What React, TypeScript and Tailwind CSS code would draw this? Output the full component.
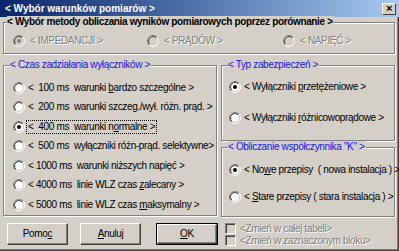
import React from 'react';

const FACE = "font-['Liberation_Sans',Arial,sans-serif]";
const DIS = 'text-[#808080] [text-shadow:1px_1px_0_#fff]';

const Radio: React.FC<{ checked?: boolean; disabled?: boolean }> = ({ checked, disabled }) => (
    <svg width="12" height="12" viewBox="0 0 12 12" className="shrink-0">
        <defs>
            <linearGradient id="rOuter" x1="0" y1="0" x2="1" y2="1">
                <stop offset="0.5" stopColor="#808080" />
                <stop offset="0.5" stopColor="#ffffff" />
            </linearGradient>
            <linearGradient id="rInner" x1="0" y1="0" x2="1" y2="1">
                <stop offset="0.5" stopColor="#404040" />
                <stop offset="0.5" stopColor="#d4d0c8" />
            </linearGradient>
        </defs>
        <circle cx="6" cy="6" r="5.5" fill="none" stroke="url(#rOuter)" />
        <circle cx="6" cy="6" r="4.5" fill={disabled ? '#d4d0c8' : '#ffffff'} stroke="url(#rInner)" />
        {checked && <circle cx="6" cy="6" r="2" fill={disabled ? '#808080' : '#000000'} />}
    </svg>
);

const Check: React.FC = () => (
    <span className="block w-[11px] h-[11px] shrink-0 border border-t-[#808080] border-l-[#808080] border-r-white border-b-white bg-[#d4d0c8] shadow-[inset_1px_1px_0_#404040,inset_-1px_-1px_0_#d4d0c8]" />
);

// etched group box with the caption laid over the top border
const Group: React.FC<{ title: React.ReactNode; titleClass?: string; className?: string; children: React.ReactNode }> = ({
    title,
    titleClass = 'left-[6px] text-[#1414e6]',
    className = '',
    children,
}) => (
    <div className={`relative border border-[#808080] shadow-[1px_1px_0_#fff,inset_1px_1px_0_#fff] ${className}`}>
        <span className={`absolute -top-[7px] bg-[#d4d0c8] pr-px leading-[12px] whitespace-pre ${titleClass}`}>{title}</span>
        {children}
    </div>
);

const Btn: React.FC<{ children: React.ReactNode; isDefault?: boolean }> = ({ children, isDefault }) => (
    <div className={isDefault ? 'border border-black' : ''}>
        <button
            className={`flex items-center justify-center bg-[#d4d0c8] border border-t-white border-l-white border-r-[#404040] border-b-[#404040] shadow-[inset_-1px_-1px_0_#808080] ${isDefault ? 'w-[60px] h-[20px]' : 'w-[61px] h-[22px]'}`}
        >
            {children}
        </button>
    </div>
);

const times: { txt: React.ReactNode; checked?: boolean }[] = [
    { txt: <>{'<  100 ms  warunki '}<u>b</u>{'ardzo szczególne >'}</> },
    { txt: <>{'<  200 ms  warunki szczeg./wył. różn. prąd. >'}</> },
    { txt: <>{'<  400 ms  warunki n'}<u>o</u>{'rmalne >'}</>, checked: true },
    { txt: <>{'<  500 ms  wyłączniki różn-prąd. selektywne>'}</> },
    { txt: <>{'< 1000 ms  warunki niższych napięć >'}</> },
    { txt: <>{'< 4000 ms  linie WLZ czas '}<u>z</u>{'alecany >'}</> },
    { txt: <>{'< 5000 ms  linie WLZ czas '}<u>m</u>{'aksymalny >'}</> },
];

export default function App() {
    return (
        <div
            className={`${FACE} text-[10px] leading-[12px] tracking-[-0.35px] text-black w-[399px] h-[251px] bg-[#d4d0c8] flex flex-col overflow-hidden shadow-[inset_-1px_-1px_0_#404040,inset_-2px_-2px_0_#808080]`}
        >
            {/* Title bar */}
            <div className="h-[17px] shrink-0 flex items-center justify-between pl-[5px] pr-[3px] bg-gradient-to-r from-[#0a246a] to-[#a6caf0]">
                <span className="font-bold text-white whitespace-pre tracking-normal">{'< Wybór warunków pomiarów >'}</span>
                <span className="flex items-center justify-center w-[14px] h-[12px] bg-[#d4d0c8] border border-t-white border-l-white border-r-[#404040] border-b-[#404040] text-[11px] font-bold leading-none">
                    ×
                </span>
            </div>

            {/* Calculation method */}
            <Group
                title="< Wybór metody obliczania wyników pomiarowych poprzez porównanie >"
                titleClass="left-[3px] font-bold text-black tracking-[-0.35px]"
                className="mt-[5px] ml-[3px] mr-[4px] h-[32px] shrink-0"
            >
                <div className={`flex items-center h-full pt-[6px] pl-[9px] ${DIS}`}>
                    <div className="flex items-center gap-[5px] w-[134px]">
                        <Radio checked disabled />
                        <span className="whitespace-pre">{'< IMPEDANCJI >'}</span>
                    </div>
                    <div className="flex items-center gap-[5px] w-[136px]">
                        <Radio disabled />
                        <span className="whitespace-pre">{'< PRĄDÓW >'}</span>
                    </div>
                    <div className="flex items-center gap-[5px]">
                        <Radio disabled />
                        <span className="whitespace-pre">{'< NAPIĘĆ >'}</span>
                    </div>
                </div>
            </Group>

            <div className="flex mt-[11px] ml-[3px] gap-[4px] shrink-0">
                {/* Breaker operation time */}
                <Group title="< Czas zadziałania wyłączników >" className="w-[214px] h-[151px]">
                    <div className="flex flex-col pt-[12px] pl-[9px]">
                        {times.map((t, i) => (
                            <div key={i} className="flex items-center gap-[2px] h-[19.5px]">
                                <Radio checked={t.checked} />
                                <span
                                    className={`whitespace-pre px-px ${t.checked ? 'outline outline-1 outline-dotted outline-black' : ''}`}
                                >
                                    {t.txt}
                                </span>
                            </div>
                        ))}
                    </div>
                </Group>

                <div className="flex flex-col gap-[6px]">
                    {/* Protection type */}
                    <Group title="< Typ zabezpieczeń >" className="w-[174px] h-[76px]">
                        <div className="flex flex-col pt-[15px] pl-[7px] gap-[19px]">
                            <div className="flex items-center gap-[3px] h-[12px]">
                                <Radio checked />
                                <span className="whitespace-pre">
                                    {'< Wyłączniki '}<u>p</u>{'rzetężeniowe >'}
                                </span>
                            </div>
                            <div className="flex items-center gap-[3px] h-[12px]">
                                <Radio />
                                <span className="whitespace-pre">
                                    {'< Wyłączniki '}<u>r</u>{'óżnicowoprądowe >'}
                                </span>
                            </div>
                        </div>
                    </Group>

                    {/* K factor */}
                    <Group title={'< Obliczanie współczynnika "K" >'} className="w-[174px] h-[70px]">
                        <div className="flex flex-col pt-[16px] pl-[7px] gap-[15px]">
                            <div className="flex items-center gap-[3px] h-[12px]">
                                <Radio checked />
                                <span className="whitespace-pre">
                                    {'< No'}<u>w</u>{'e przepisy  ( nowa instalacja ) >'}
                                </span>
                            </div>
                            <div className="flex items-center gap-[3px] h-[12px]">
                                <Radio />
                                <span className="whitespace-pre">
                                    {'< '}<u>S</u>{'tare przepisy ( stara instalacja ) >'}
                                </span>
                            </div>
                        </div>
                    </Group>
                </div>
            </div>

            {/* Buttons and checkboxes */}
            <div className="flex items-start mt-[6px] ml-[7px]">
                <div className="flex gap-[12px]">
                    <Btn>
                        Pomo<u>c</u>
                    </Btn>
                    <Btn>
                        <u>A</u>nuluj
                    </Btn>
                </div>
                <div className="ml-[15px]">
                    <Btn isDefault>
                        <u>O</u>K
                    </Btn>
                </div>
                <div className={`flex flex-col gap-[1px] ml-[7px] leading-[11px] ${DIS}`}>
                    <div className="flex items-center gap-[4px]">
                        <Check />
                        <span className="whitespace-pre">{'<Zmień w całej tabeli>'}</span>
                    </div>
                    <div className="flex items-center gap-[4px]">
                        <Check />
                        <span className="whitespace-pre">{'<Zmień w zaznaczonym bloku>'}</span>
                    </div>
                </div>
            </div>
        </div>
    );
}
